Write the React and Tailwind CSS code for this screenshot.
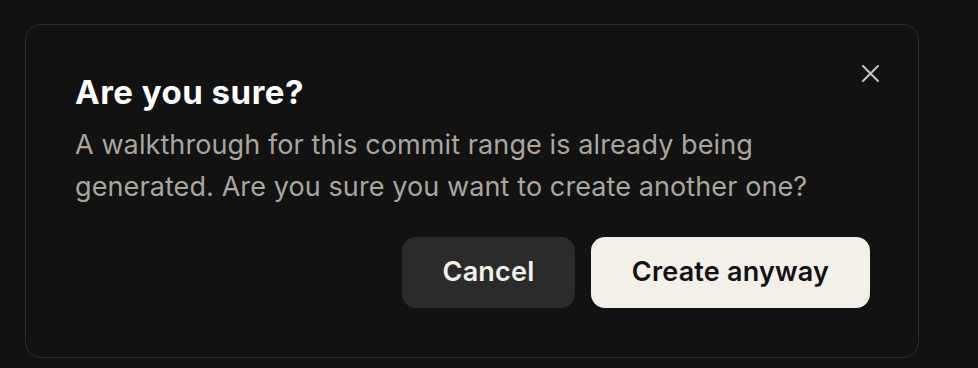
export default function App() {
  return (
    <div
      className="min-h-screen bg-[#121212] pl-[25px] pt-[24px]"
      style={{ fontFamily: "Inter, 'Noto Sans', sans-serif" }}
    >
      <div className="relative w-[894px] h-[334px] rounded-[16px] border border-[#2c2c2c] bg-[#121212] pl-[49px] pr-[48px] pt-[49px]">
        <button className="absolute right-[38px] top-[39px] flex h-[19px] w-[19px] items-center justify-center text-[#c4c4c4]">
          <svg width="19" height="19" viewBox="0 0 19 19" fill="none">
            <path
              d="M2 2L17 17M17 2L2 17"
              stroke="currentColor"
              strokeWidth="2"
              strokeLinecap="round"
            />
          </svg>
        </button>

        <h2 className="text-[33px] font-bold leading-[36px] tracking-[0.5px] text-white">
          Are you sure?
        </h2>
        <p className="mt-[14px] text-[27px] leading-[42px] tracking-[0.1px] text-[#aaa59e]">
          A walkthrough for this commit range is already being
          <br />
          generated. Are you sure you want to create another one?
        </p>

        <div className="mt-[29px] flex justify-end gap-[16px]">
          <button className="h-[71px] w-[173px] rounded-[14px] bg-[#2b2b2b] text-[27px] font-semibold tracking-[0.2px] text-[#f3efe9]">
            Cancel
          </button>
          <button className="h-[71px] w-[279px] rounded-[14px] bg-[#f3efe9] text-[27px] font-semibold tracking-[0.2px] text-[#121212]">
            Create anyway
          </button>
        </div>
      </div>
    </div>
  );
}
